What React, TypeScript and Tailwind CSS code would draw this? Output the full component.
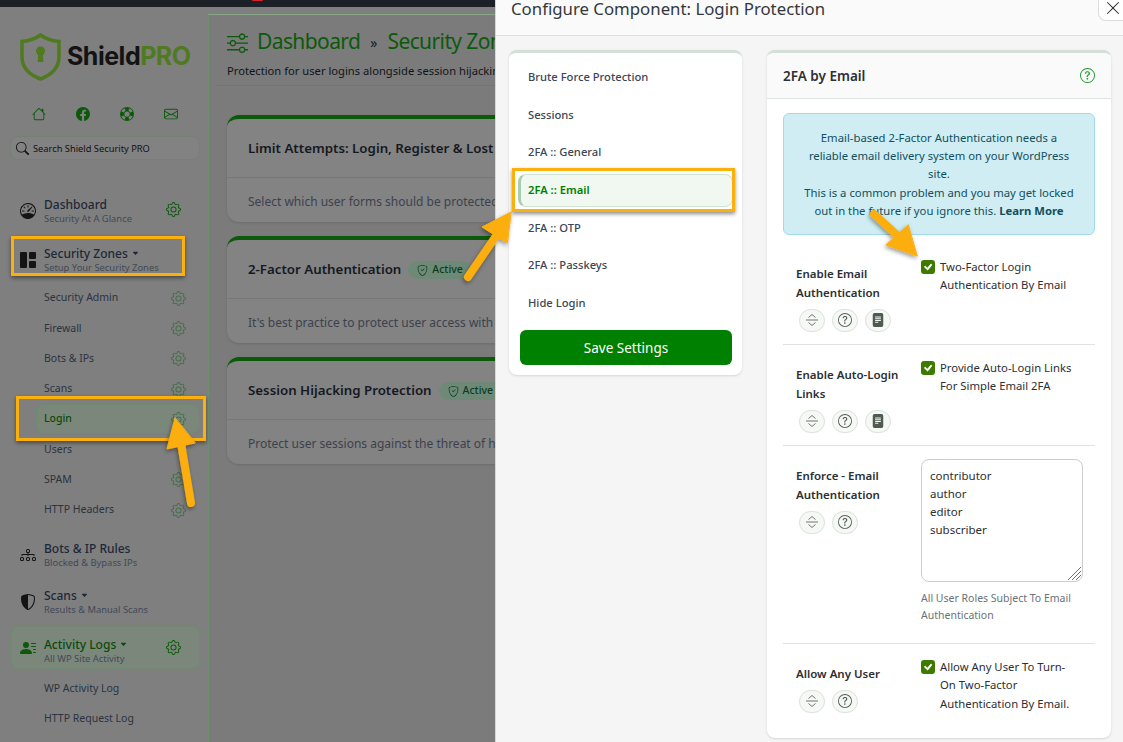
import {
  BsCaretDownFill,
  BsCheck,
  BsDiagram3,
  BsEnvelope,
  BsFacebook,
  BsFileTextFill,
  BsGear,
  BsGrid1X2Fill,
  BsHouse,
  BsLifePreserver,
  BsPersonLinesFill,
  BsQuestionCircle,
  BsSearch,
  BsShieldCheck,
  BsShieldShaded,
  BsSliders,
  BsSpeedometer,
  BsXLg,
} from 'react-icons/bs';

function Logo() {
  return (
    <div className="ml-[20px] mt-[26px] h-[47px] flex items-center">
      <svg width="41" height="48" viewBox="0 0 41 48" fill="none">
        <path d="M20.5 2 C26 6 32 8 39 8.500 V24 C39 35 31 42 20.500 46 C10 42 2 35 2 24 V8.500 C9 8 15 6 20.500 2Z" stroke="#4f7a1e" strokeWidth="3.500" />
        <circle cx="20.500" cy="18" r="4.500" fill="#4f7a1e" />
        <path d="M18.500 20 H22.500 L23.500 29 H17.500Z" fill="#4f7a1e" />
      </svg>
      <span className="ml-[6px] text-[25px] font-bold tracking-[-0.5px] text-[#131313] font-['Inter',sans-serif]">
        Shield<span className="text-[#4f7a1e]">PRO</span>
      </span>
    </div>
  );
}

function NavItem({ icon, title, sub, caret, gear }: { icon: React.ReactNode; title: string; sub: string; caret?: boolean; gear?: boolean }) {
  return (
    <div className="h-[40px] flex items-center pl-[20px] pr-[27px]">
      <div className="w-[16px] flex justify-center text-[#141414] text-[16px]">{icon}</div>
      <div className="ml-[8px] flex-1">
        <div className="-translate-y-px flex items-center gap-[4px] text-[12px] leading-[15px] font-medium text-[#1d2838]">
          {title}
          {caret && <BsCaretDownFill className="text-[7px]" />}
        </div>
        <div className="text-[9.400px] leading-[12px] text-[#3f4a55]">{sub}</div>
      </div>
      {gear && <BsGear className="-mt-[4px] text-[15px] text-[#0b5a0b]" />}
    </div>
  );
}

function SubItem({ label, gear = true }: { label: string; gear?: boolean }) {
  return (
    <div className="h-[30.300px] flex items-center pl-[44px] pr-[22px] justify-between text-[10.500px] text-[#2b3340]">
      <span>{label}</span>
      {gear && <BsGear className="text-[15px] text-[#44704a]" />}
    </div>
  );
}

function Sidebar() {
  return (
    <aside className="w-[208px] shrink-0 h-full">
      <Logo />
      <div className="mt-[24px] h-[20px] flex items-center pl-[32px] gap-[30px] text-[14px] text-[#0b5a0b]">
        <BsHouse />
        <BsFacebook />
        <BsLifePreserver />
        <BsEnvelope />
      </div>
      <div className="mt-[12px] ml-[10px] mr-[8px] h-[24px] flex items-center gap-[4px] pl-[5px] pt-[2px] rounded-lg border border-[#777f77] bg-[#828282] text-[9.300px] text-[#111111]">
        <BsSearch className="-mt-[2px] text-[13px]" />
        <span>Search Shield Security PRO</span>
      </div>
      <div className="mt-[31px]">
        <NavItem icon={<BsSpeedometer />} title="Dashboard" sub="Security At A Glance" gear />
      </div>
      <div className="mt-[9px]">
        <NavItem icon={<BsGrid1X2Fill />} title="Security Zones" sub="Setup Your Security Zones" caret />
      </div>
      <div className="mt-[3px]">
        <SubItem label="Security Admin" />
        <SubItem label="Firewall" />
        <SubItem label="Bots & IPs" />
        <SubItem label="Scans" />
        <div className="h-[30.300px] flex items-center ml-[35px] mr-[8px] pl-[7px] pr-[13px] justify-between rounded-lg border border-[#6f8a70] border-l-2 bg-[#7c877c] text-[10.500px] font-medium text-[#0b4a0b]">
          <span>Login</span>
          <BsGear className="text-[15px] text-[#44704a]" />
        </div>
        <SubItem label="Users" gear={false} />
        <SubItem label="SPAM" />
        <SubItem label="HTTP Headers" />
      </div>
      <div className="mt-[10px]">
        <NavItem icon={<BsDiagram3 />} title="Bots & IP Rules" sub="Blocked & Bypass IPs" />
      </div>
      <div className="mt-[7px]">
        <NavItem icon={<BsShieldShaded />} title="Scans" sub="Results & Manual Scans" caret />
      </div>
      <div className="mt-[4px] ml-[10px] mr-[8px] h-[43px] flex items-center pl-[8px] pr-[18px] rounded-lg border border-[#6f8a70] border-l-2 bg-[#7c877c]">
        <BsPersonLinesFill className="text-[16px] text-[#0b5a0b]" />
        <div className="ml-[8px] flex-1 pt-[7px]">
          <div className="-translate-y-px flex items-center gap-[4px] text-[12px] leading-[15px] font-medium text-[#0b4a0b]">
            Activity Logs
            <BsCaretDownFill className="text-[7px]" />
          </div>
          <div className="text-[9.400px] leading-[12px] text-[#3f4a55]">All WP Site Activity</div>
        </div>
        <BsGear className="text-[15px] text-[#0b5a0b]" />
      </div>
      <div className="mt-[4.500px]">
        <SubItem label="WP Activity Log" gear={false} />
        <SubItem label="HTTP Request Log" gear={false} />
      </div>
    </aside>
  );
}

function ZoneCard({ title, text, active }: { title: string; text: string; active?: boolean }) {
  return (
    <div className="w-[420px] h-[107px] rounded-xl border-t-[4px] border-[#0a5a0a] bg-[#838383] shadow-sm">
      <div className="h-[59px] flex items-center gap-[7px] pl-[21px] pt-[2px] border-b border-[#777777] text-[13.300px] font-semibold text-[#15191f] whitespace-nowrap">
        {title}
        {active && (
          <span className="h-[18px] flex items-center gap-[4px] rounded-full bg-[#6e8a77] px-[9px] text-[10.500px] font-medium text-[#0b3d1f]">
            <BsShieldCheck className="text-[11px]" />
            Active
          </span>
        )}
      </div>
      <div className="pl-[21px] pt-[15px] text-[12px] leading-[18px] text-[#3b424c] whitespace-nowrap">{text}</div>
    </div>
  );
}

function MainArea() {
  return (
    <main className="flex-1 min-w-0 mt-[7px] overflow-hidden bg-[#7b7b7b] border-t border-t-[#86a886] border-l border-l-[#6f8f70]">
      <div className="w-[420px] ml-[18px] mt-[14px] flex items-center h-[26px]">
        <BsSliders className="text-[21px] text-[#0b5a0b]" />
        <span className="ml-[9px] text-[21px] tracking-[-0.6px] text-[#0b5a0b] whitespace-nowrap">Dashboard</span>
        <span className="mx-[10px] text-[14px] text-[#15191f]">»</span>
        <span className="text-[21px] tracking-[-0.6px] text-[#0b5a0b] whitespace-nowrap">Security Zones</span>
      </div>
      <div className="ml-[18px] mt-[7px] w-[420px] text-[11.200px] leading-[17px] text-[#11151a] whitespace-nowrap">
        Protection for user logins alongside session hijacking protection.
      </div>
      <div className="ml-[7px] mt-[6px] h-px w-[420px] bg-[#747474]" />
      <div className="ml-[18px] mt-[29px] flex flex-col gap-[14px]">
        <ZoneCard title="Limit Attempts: Login, Register & Lost Password" text="Select which user forms should be protected against bots and attacks." />
        <ZoneCard title="2-Factor Authentication" active text="It's best practice to protect user access with additional factors." />
        <ZoneCard title="Session Hijacking Protection" active text="Protect user sessions against the threat of hijacking attacks." />
      </div>
    </main>
  );
}

function IconButtons({ doc = true }: { doc?: boolean }) {
  const cls = 'w-[26px] h-[23px] flex items-center justify-center rounded-full border border-[#d8e2d9] bg-[#f6f8f6] text-[#555f58]';
  return (
    <div className="mt-[7px] ml-[3px] flex gap-[7px]">
      <span className={cls}>
        <svg width="14" height="14" viewBox="0 0 14 14" fill="none" stroke="#5d6660" strokeWidth="0.900">
          <path d="M3.500 4.500 L7 1.500 L10.500 4.500" />
          <path d="M1 7 H13" />
          <path d="M3.500 9.500 L7 12.500 L10.500 9.500" />
        </svg>
      </span>
      <span className={cls}>
        <BsQuestionCircle className="text-[14px]" />
      </span>
      {doc && (
        <span className={cls}>
          <BsFileTextFill className="text-[14px] text-[#4f5a53]" />
        </span>
      )}
    </div>
  );
}

function Check({ children }: { children: React.ReactNode }) {
  return (
    <div className="flex gap-[5px] text-[11.300px] leading-[18.300px] text-[#2c2f33]">
      <span className="w-[14px] h-[14px] shrink-0 rounded-[3px] bg-[#3f7a00] flex items-center justify-center text-white text-[14px]">
        <BsCheck strokeWidth={1} />
      </span>
      <span className="-mt-[2px]">{children}</span>
    </div>
  );
}

function OptionRow({ label, doc = true, height, last, children }: { label: React.ReactNode; doc?: boolean; height: string; last?: boolean; children: React.ReactNode }) {
  return (
    <div className={`grid grid-cols-[125px_1fr] pl-[13px] pt-[16px] ${last ? '' : 'border-b border-[#dfe3e1]'} ${height}`}>
      <div className="pt-[3.500px]">
        <div className="text-[11.500px] leading-[19px] font-semibold text-[#2c2f33]">{label}</div>
        <IconButtons doc={doc} />
      </div>
      <div className="pr-[12px]">{children}</div>
    </div>
  );
}

const MENU = ['Brute Force Protection', 'Sessions', '2FA :: General', '2FA :: Email', '2FA :: OTP', '2FA :: Passkeys', 'Hide Login'];

function Modal() {
  return (
    <section className="flex-1 h-full flex flex-col bg-[#f5f5f5] border-l border-[#d5d8d5] overflow-hidden">
      <header className="h-[36px] shrink-0 flex justify-between items-start pl-[15px] bg-[#fafafa] border-b border-[#dedede]">
        <h2 className="text-[16.800px] leading-[18px] text-[#33383c]">Configure Component: Login Protection</h2>
        <button className="-mt-[6px] w-[25px] h-[27px] shrink-0 pl-[6px] flex items-center rounded-l-lg border border-r-0 border-[#dcdcdc] bg-white text-[#2a2a2a] text-[16px]">
          <BsXLg />
        </button>
      </header>
      <div className="flex items-start pl-[13px] pt-[14px]">
        <div className="w-[233px] h-[325px] rounded-lg border-t-[3px] border-[#d3e0d5] bg-white shadow-sm px-[9px] pt-[5.500px]">
          {MENU.map((m) =>
            m === '2FA :: Email' ? (
              <div key={m} className="h-[33px] my-[2.350px] flex items-center pl-[7px] rounded-lg border border-[#cfe3d2] border-l-[3px] border-l-[#a9cdae] bg-[#f1f8f2] text-[11.200px] font-semibold text-[#008000]">
                {m}
              </div>
            ) : (
              <div key={m} className="h-[37.700px] flex items-center pl-[10px] text-[11.200px] font-medium text-[#3a4656]">
                {m}
              </div>
            )
          )}
          <button className="mt-[7.500px] ml-[2px] w-[212px] h-[35px] pt-[1px] rounded-md bg-[#008000] text-[13.500px] text-white">Save Settings</button>
        </div>
        <div className="ml-[25px] w-[344px] h-[688px] rounded-lg border-t-[3px] border-[#d3e0d5] bg-white shadow-sm overflow-hidden">
          <div className="h-[46px] flex items-center justify-between px-[16px] pt-[1px] bg-[#fafafa] border-b border-[#dde3e0] text-[13.500px] font-semibold text-[#2c2f33]">
            2FA by Email
            <BsQuestionCircle className="-mt-[2px] text-[15px] text-[#1c9a2a]" />
          </div>
          <div className="mx-[16px] mt-[14px]">
            <div className="h-[122px] pt-[15px] rounded-md border border-[#a1dbe8] bg-[#cfedf3] text-center text-[11.300px] leading-[18.200px] text-[#114f5e]">
              Email-based 2-Factor Authentication needs a
              <br />
              reliable email delivery system on your WordPress
              <br />
              site.
              <br />
              This is a common problem and you may get locked
              <br />
              out in the future if you ignore this. <b>Learn More</b>
            </div>
            <div className="mt-[9px]">
              <OptionRow label="Enable Email Authentication" height="h-[101px]">
                <Check>
                  Two-Factor Login
                  <br />
                  Authentication By Email
                </Check>
              </OptionRow>
            </div>
            <OptionRow label="Enable Auto-Login Links" height="h-[101px]">
              <Check>
                Provide Auto-Login Links
                <br />
                For Simple Email 2FA
              </Check>
            </OptionRow>
            <div className="grid grid-cols-[125px_1fr] pl-[13px] pt-[13px] border-b border-[#dfe3e1] h-[198px]">
              <div className="pt-[6.500px]">
                <div className="text-[11.500px] leading-[19px] font-semibold text-[#2c2f33]">
                  Enforce - Email
                  <br />
                  Authentication
                </div>
                <IconButtons doc={false} />
              </div>
              <div>
                <div className="relative w-[162px] h-[123px]">
                  <textarea
                    readOnly
                    defaultValue={'contributor\nauthor\neditor\nsubscriber'}
                    className="block w-full h-full resize-none rounded-lg border border-[#c9cdd0] px-[8px] pt-[7px] text-[11.500px] leading-[18px] text-[#2c2f33] outline-none"
                  />
                  <svg className="absolute right-[1px] bottom-[1px]" width="15" height="15" viewBox="0 0 15 15" stroke="#6f6f6f" strokeWidth="1">
                    <path d="M1 14 L14 1 M5 14 L14 5 M9 14 L14 9" />
                  </svg>
                </div>
                <p className="mt-[8px] text-[10.500px] leading-[17px] text-[#6a7279]">
                  All User Roles Subject To Email
                  <br />
                  Authentication
                </p>
              </div>
            </div>
            <OptionRow label="Allow Any User" doc={false} height="h-[95px]" last>
              <Check>
                Allow Any User To Turn-
                <br />
                On Two-Factor
                <br />
                Authentication By Email.
              </Check>
            </OptionRow>
          </div>
        </div>
      </div>
    </section>
  );
}

function Annotations() {
  return (
    <>
      <div className="absolute left-[11px] top-[236px] w-[174px] h-[40px] border-[3px] border-[#fbb00e] shadow-[0_2px_4px_rgba(0,0,0,0.45)]" />
      <div className="absolute left-[16px] top-[396px] w-[190px] h-[45px] border-[3px] border-[#fbb00e] shadow-[0_2px_4px_rgba(0,0,0,0.45)]" />
      <div className="absolute left-[512px] top-[168px] w-[223px] h-[44px] border-[3px] border-[#fbb00e] shadow-[0_2px_4px_rgba(0,0,0,0.45)]" />
      <svg className="absolute left-0 top-0 pointer-events-none" width="1123" height="742" viewBox="0 0 1123 742">
        <defs>
          <filter id="arrow-shadow" x="-30%" y="-30%" width="160%" height="160%">
            <feDropShadow dx="-1" dy="2" stdDeviation="2" floodColor="#000" floodOpacity="0.4" />
          </filter>
        </defs>
        <g filter="url(#arrow-shadow)" fill="#fbae0c" stroke="#fbae0c" strokeLinecap="round">
          <path d="M191 503 L181 443" strokeWidth="8" />
          <path d="M175 418 L167 449 L195 443Z" strokeWidth="1" />
          <path d="M468 277 L496 236" strokeWidth="8" />
          <path d="M511 212 L482 227 L507 243Z" strokeWidth="1" />
          <path d="M874 214 L898 236" strokeWidth="8" />
          <path d="M917 256 L886 245 L908 225Z" strokeWidth="1" />
        </g>
      </svg>
    </>
  );
}

export default function App() {
  return (
    <div className="relative w-[1123px] h-[742px] overflow-hidden flex font-['Noto_Sans',sans-serif]">
      <div className="w-[495px] shrink-0 h-full flex flex-col">
        <div className="h-[7px] shrink-0 bg-[#1b2126] pl-[252px]">
          <div className="w-[11px] h-[1px] rounded-b bg-[#d8232a]" />
        </div>
        <div className="flex-1 flex min-h-0 bg-[#7f7f7f]">
          <Sidebar />
          <MainArea />
        </div>
      </div>
      <Modal />
      <Annotations />
    </div>
  );
}
